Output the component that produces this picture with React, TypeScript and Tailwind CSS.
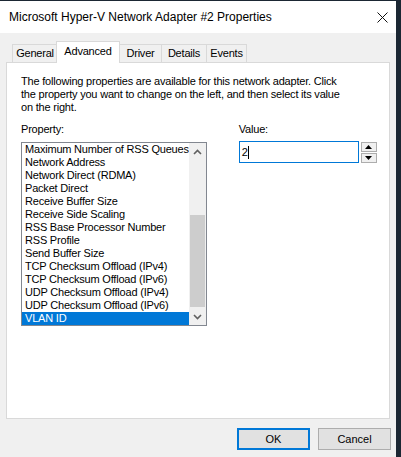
import type { ReactNode } from 'react';

const FONT = { fontFamily: '"Liberation Sans", Arial, sans-serif' };

const PROPERTIES = [
  'Maximum Number of RSS Queues',
  'Network Address',
  'Network Direct (RDMA)',
  'Packet Direct',
  'Receive Buffer Size',
  'Receive Side Scaling',
  'RSS Base Processor Number',
  'RSS Profile',
  'Send Buffer Size',
  'TCP Checksum Offload (IPv4)',
  'TCP Checksum Offload (IPv6)',
  'UDP Checksum Offload (IPv4)',
  'UDP Checksum Offload (IPv6)',
  'VLAN ID',
];

const TABS = [
  { label: 'General', w: 'w-[45px]' },
  { label: 'Advanced', w: 'w-[64px]', active: true },
  { label: 'Driver', w: 'w-[42px]' },
  { label: 'Details', w: 'w-[45px]' },
  { label: 'Events', w: 'w-[41px]' },
];

function Tab({ label, w, active }: { label: string; w: string; active?: boolean }) {
  if (active) {
    return (
      <div
        className={`${w} h-[22px] -mx-px -mb-px relative z-10 bg-white border border-b-0 border-[#d9d9d9] flex items-start justify-center pt-[3px] text-[11px] leading-[13px]`}
      >
        {label}
      </div>
    );
  }
  return (
    <div
      className={`${w} h-[18px] bg-[#f0f0f0] border border-b-0 border-[#d9d9d9] border-r-0 last:border-r flex items-start justify-center pt-[2px] text-[11px] leading-[13px]`}
    >
      {label}
    </div>
  );
}

function Chevron({ up }: { up?: boolean }) {
  return (
    <svg width="9" height="6" viewBox="0 0 9 6" fill="none">
      <path
        d={up ? 'M1 5 L4.5 1.5 L8 5' : 'M1 1 L4.5 4.5 L8 1'}
        stroke="#606060"
        strokeWidth="1.6"
      />
    </svg>
  );
}

function SpinButton({ children }: { children: ReactNode }) {
  return (
    <div className="h-[10px] w-[16px] border border-[#adadad] bg-[#f0f0f0] flex items-center justify-center">
      {children}
    </div>
  );
}

function Button({ label, primary }: { label: string; primary?: boolean }) {
  return (
    <div
      className={`w-[73px] h-[22px] bg-[#e1e1e1] flex items-center justify-center text-[11px] ${
        primary ? 'border-2 border-[#0078d7]' : 'border border-[#adadad]'
      }`}
    >
      {label}
    </div>
  );
}

export default function App() {
  return (
    <div className="w-[401px] h-[457px] bg-[#1b2733] overflow-hidden text-black" style={FONT}>
      <div className="mt-px w-[396px] h-[456px] bg-[#f0f0f0] flex flex-col">
        {/* Title bar */}
        <div className="h-[32px] bg-white flex items-center justify-between pl-[9px] pr-[8px]">
          <span className="text-[12px] leading-[14px]">Microsoft Hyper-V Network Adapter #2 Properties</span>
          <svg width="11" height="11" viewBox="0 0 11 11">
            <path d="M0.5 0.5 L10.5 10.5 M10.5 0.5 L0.5 10.5" stroke="#111" strokeWidth="1" />
          </svg>
        </div>

        {/* Tabs */}
        <div className="mt-[8px] ml-[12px] flex items-end h-[21px] tracking-[-0.2px]">
          {TABS.map((t) => (
            <Tab key={t.label} {...t} />
          ))}
        </div>

        {/* Panel */}
        <div className="ml-[6px] w-[384px] h-[357px] border border-[#d9d9d9] bg-white px-[14px] pt-[12px] tracking-[-0.2px]">
          <p className="text-[11px] leading-[13px] w-[330px]">
            The following properties are available for this network adapter. Click the property you want to change on
            the left, and then select its value on the right.
          </p>

          <div className="mt-[9px] flex">
            {/* Property list */}
            <div className="w-[186px] flex flex-col">
              <div className="text-[11px] leading-[13px] h-[13px]">Property:</div>
              <div className="mt-[6px] h-[184px] border border-[#828790] flex">
                <div className="flex-1 flex flex-col">
                  {PROPERTIES.map((p) => (
                    <div
                      key={p}
                      className={`h-[13px] leading-[13px] text-[11px] pl-[3px] whitespace-nowrap overflow-hidden ${
                        p === 'VLAN ID' ? 'bg-[#0078d7] text-white' : ''
                      }`}
                    >
                      {p}
                    </div>
                  ))}
                </div>
                <div className="w-[17px] bg-[#f0f0f0] flex flex-col">
                  <div className="h-[17px] flex items-center justify-center">
                    <Chevron up />
                  </div>
                  <div className="flex-1 flex flex-col justify-end pb-[1px]">
                    <div className="h-[92px] mx-px bg-[#cdcdcd]" />
                  </div>
                  <div className="h-[17px] flex items-center justify-center">
                    <Chevron />
                  </div>
                </div>
              </div>
            </div>

            {/* Value */}
            <div className="ml-[32px] flex flex-col">
              <div className="text-[11px] leading-[13px] h-[13px]">Value:</div>
              <div className="mt-[5px] flex items-center gap-[2px]">
                <div className="w-[120px] h-[22px] border border-[#0078d7] flex items-center pl-[2px] text-[11px]">
                  2<span className="w-px h-[13px] bg-black" />
                </div>
                <div className="flex flex-col gap-px">
                  <SpinButton>
                    <svg width="7" height="4" viewBox="0 0 7 4">
                      <path d="M0 4 L3.5 0 L7 4 Z" fill="#000" />
                    </svg>
                  </SpinButton>
                  <SpinButton>
                    <svg width="7" height="4" viewBox="0 0 7 4">
                      <path d="M0 0 L3.5 4 L7 0 Z" fill="#000" />
                    </svg>
                  </SpinButton>
                </div>
              </div>
            </div>
          </div>
        </div>

        {/* Buttons */}
        <div className="mt-[9px] ml-[237px] flex gap-[8px]">
          <Button label="OK" primary />
          <Button label="Cancel" />
        </div>
      </div>
    </div>
  );
}
